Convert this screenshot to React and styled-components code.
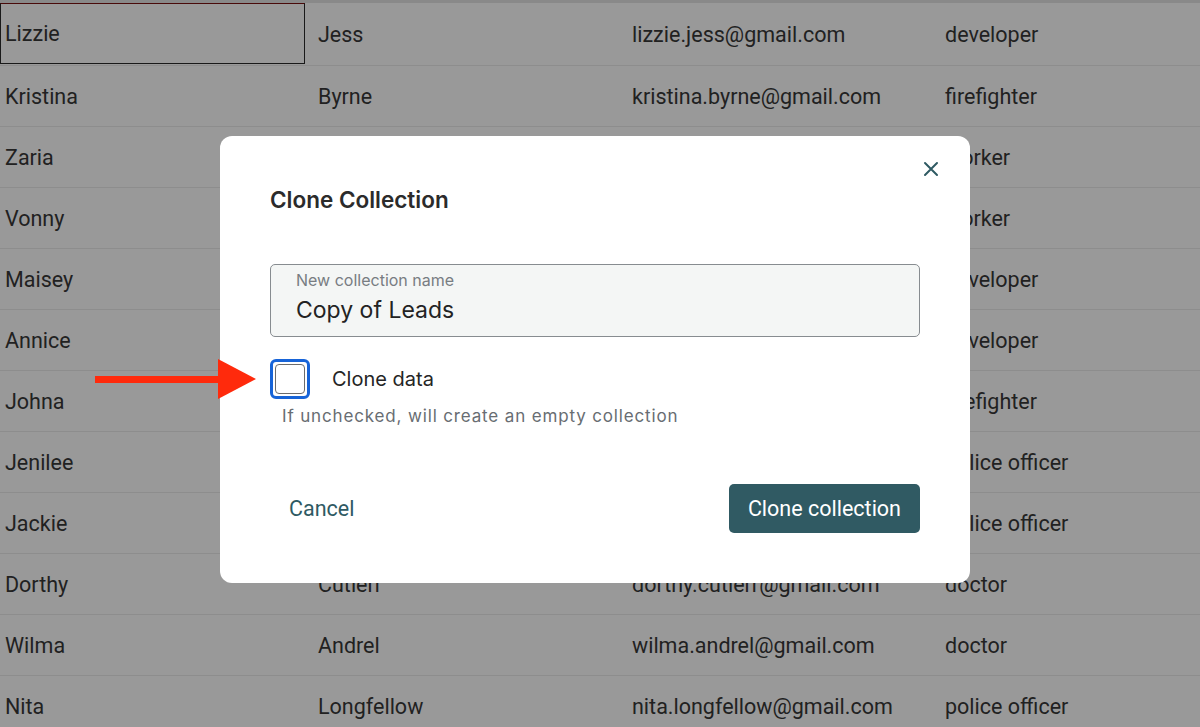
import React from "react";
import styled, { createGlobalStyle } from "styled-components";

const Global = createGlobalStyle`
  html, body { margin: 0; padding: 0; background: #fff; }
  body { font-family: Roboto, "Noto Sans", Arial, sans-serif; overflow: hidden; }
  * { box-sizing: border-box; }
`;

const Page = styled.div`
  position: relative;
  width: 1200px;
  height: 727px;
  overflow: hidden;
`;

const Table = styled.div`
  border-top: 3px solid #e4e4e4;
  padding-top: 0;
`;

const Row = styled.div`
  display: grid;
  grid-template-columns: 313px 314px 313px 1fr;
  height: 61px;
  border-bottom: 1px solid #ececec;
  &:first-child { height: 63px; }
`;

const Cell = styled.div`
  display: flex;
  align-items: center;
  padding-left: ${(p) => (p.$selected ? "4px" : "5px")};
  font-size: 21.5px;
  color: #383838;
  white-space: nowrap;
  ${(p) =>
    p.$selected &&
    `
    border: 1px solid #2a2a2a;
    border-top-color: #7a1212;
    margin-right: 8px;
    margin-bottom: 1px;
  `}
`;

const Overlay = styled.div`
  position: absolute;
  inset: 0;
  background: rgba(0, 0, 0, 0.4);
  display: flex;
  justify-content: center;
  align-items: flex-start;
  padding: 136px 230px 0 220px;
`;

const Modal = styled.div`
  position: relative;
  width: 750px;
  background: #fff;
  border-radius: 12px;
  padding: 50px;
  display: flex;
  flex-direction: column;
  font-family: Inter, Roboto, sans-serif;
`;

const CloseButton = styled.button`
  position: absolute;
  top: 18px;
  right: 24px;
  width: 30px;
  height: 30px;
  border: none;
  background: none;
  padding: 0;
  display: flex;
  align-items: center;
  justify-content: center;
  cursor: pointer;
`;

const Title = styled.h2`
  margin: 0;
  font-size: 22.5px;
  line-height: 28px;
  font-weight: 600;
  color: #2b2b2b;
`;

const Field = styled.div`
  margin-top: 50px;
  height: 73px;
  background: #f4f6f5;
  border: 1px solid #878c90;
  border-radius: 5px;
  padding: 6px 25px 0 25px;
  display: flex;
  flex-direction: column;
`;

const FieldLabel = styled.label`
  font-size: 16px;
  line-height: 19px;
  color: #787d82;
`;

const FieldValue = styled.div`
  margin-top: 5px;
  font-size: 23px;
  line-height: 30px;
  color: #232323;
`;

const CheckRow = styled.div`
  margin-top: 22px;
  display: flex;
  align-items: center;
  gap: 22px;
`;

const CheckRing = styled.div`
  width: 40px;
  height: 40px;
  border: 3px solid #1764d8;
  border-radius: 6px;
  padding: 2px;
  display: flex;
`;

const CheckBox = styled.div`
  flex: 1;
  border: 1.5px solid #6c6c6c;
  border-radius: 4px;
  background: #fff;
`;

const CheckLabel = styled.span`
  font-size: 20px;
  color: #252525;
`;

const Helper = styled.div`
  margin-top: 7px;
  margin-left: 12px;
  font-size: 17px;
  line-height: 20px;
  letter-spacing: 0.85px;
  color: #686d72;
`;

const Footer = styled.div`
  margin-top: 58px;
  display: flex;
  justify-content: space-between;
  align-items: center;
`;

const TextButton = styled.button`
  border: none;
  background: none;
  font-family: Roboto, sans-serif;
  font-size: 21.5px;
  color: #2f5a63;
  padding: 0 19px;
  height: 49px;
  cursor: pointer;
`;

const PrimaryButton = styled.button`
  border: none;
  background: #305a63;
  color: #fff;
  font-family: Roboto, sans-serif;
  font-size: 21.5px;
  height: 49px;
  padding: 0 19px;
  border-radius: 5px;
  cursor: pointer;
`;

const Arrow = styled.svg`
  position: absolute;
  left: 95px;
  top: 359px;
`;

const rows = [
  ["Lizzie", "Jess", "lizzie.jess@gmail.com", "developer"],
  ["Kristina", "Byrne", "kristina.byrne@gmail.com", "firefighter"],
  ["Zaria", "Hale", "zaria.hale@gmail.com", "worker"],
  ["Vonny", "Pratt", "vonny.pratt@gmail.com", "worker"],
  ["Maisey", "Ward", "maisey.ward@gmail.com", "developer"],
  ["Annice", "Bell", "annice.bell@gmail.com", "developer"],
  ["Johna", "Reed", "johna.reed@gmail.com", "firefighter"],
  ["Jenilee", "Moss", "jenilee.moss@gmail.com", "police officer"],
  ["Jackie", "Lane", "jackie.lane@gmail.com", "police officer"],
  ["Dorthy", "Cutlerr", "dorthy.cutlerr@gmail.com", "doctor"],
  ["Wilma", "Andrel", "wilma.andrel@gmail.com", "doctor"],
  ["Nita", "Longfellow", "nita.longfellow@gmail.com", "police officer"],
];

export default function App() {
  return (
    <Page>
      <Global />
      <Table>
        {rows.map((r, i) => (
          <Row key={i}>
            {r.map((c, j) => (
              <Cell key={j} $selected={i === 0 && j === 0}>
                {c}
              </Cell>
            ))}
          </Row>
        ))}
      </Table>
      <Overlay>
        <Modal>
          <CloseButton aria-label="Close">
            <svg width="16" height="16" viewBox="0 0 16 16">
              <path d="M2 2 L14 14 M14 2 L2 14" stroke="#2f5a63" strokeWidth="2" strokeLinecap="round" />
            </svg>
          </CloseButton>
          <Title>Clone Collection</Title>
          <Field>
            <FieldLabel>New collection name</FieldLabel>
            <FieldValue>Copy of Leads</FieldValue>
          </Field>
          <CheckRow>
            <CheckRing>
              <CheckBox />
            </CheckRing>
            <CheckLabel>Clone data</CheckLabel>
          </CheckRow>
          <Helper>If unchecked, will create an empty collection</Helper>
          <Footer>
            <TextButton>Cancel</TextButton>
            <PrimaryButton>Clone collection</PrimaryButton>
          </Footer>
        </Modal>
      </Overlay>
      <Arrow width="162" height="40" viewBox="0 0 162 40">
        <rect x="0" y="17" width="125" height="7" fill="#ff2a0c" />
        <polygon points="123,0 161,20 123,40" fill="#ff2a0c" />
      </Arrow>
    </Page>
  );
}
